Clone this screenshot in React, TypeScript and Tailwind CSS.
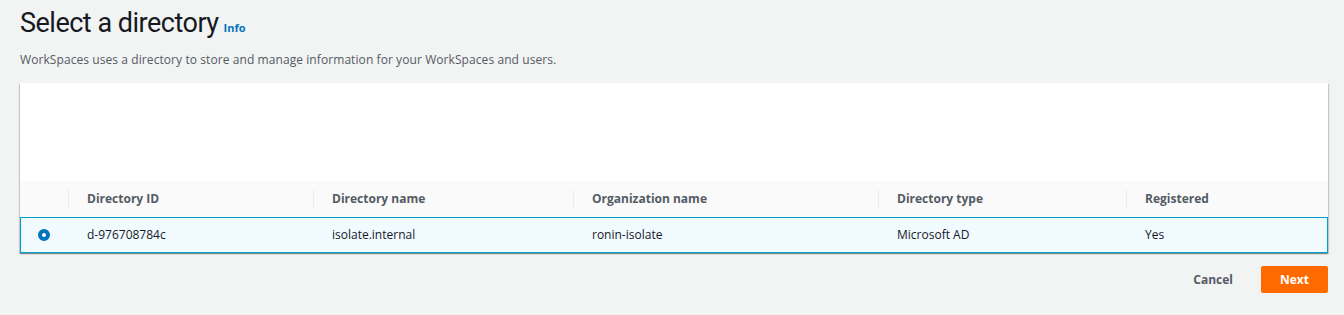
const columns = ["Directory ID", "Directory name", "Organization name", "Directory type", "Registered"];
const row = ["d-976708784c", "isolate.internal", "ronin-isolate", "Microsoft AD", "Yes"];

export default function App() {
  return (
    <div
      className="min-h-[315px] bg-[#f2f3f3] px-5 pt-[5px] text-[#16191f]"
      style={{ fontFamily: '"Open Sans", "Noto Sans", Arial, sans-serif' }}
    >
      <div className="flex items-baseline gap-[5px]">
        <h1 className="font-['Roboto',sans-serif] text-[27px] leading-[36px] font-normal tracking-[-0.5px]">Select a directory</h1>
        <a className="text-[11px] font-bold text-[#0073bb]">Info</a>
      </div>
      <p className="mt-[11px] text-[12px] leading-[16px] tracking-[0.08px] text-[#545b64]">
        WorkSpaces uses a directory to store and manage information for your WorkSpaces and users.
      </p>

      <div className="mt-[15px] w-[1308px] bg-white shadow-[0_1px_1px_0_rgba(0,28,36,0.3),1px_1px_1px_0_rgba(0,28,36,0.15),-1px_1px_1px_0_rgba(0,28,36,0.15)]">
        <div className="h-[98px]" />
        <div className="grid grid-cols-[48px_245px_260px_305px_248px_1fr] h-[37px] bg-[#fafafa] border-b border-[#eaeded] text-[12px] font-bold text-[#545b64]">
          <div />
          {columns.map((c) => (
            <div key={c} className="flex items-center">
              <span className="h-[18px] border-l border-[#eaeded]" />
              <span className="pl-[18px]">{c}</span>
            </div>
          ))}
        </div>
        <div className="grid grid-cols-[48px_245px_260px_305px_248px_1fr] h-[36px] bg-[#f1faff] border border-[#00a1c9] text-[12px] -mt-px">
          <div className="flex items-center pl-[17px]">
            <span className="h-[12px] w-[12px] rounded-full border-[4px] border-[#0073bb] bg-white" />
          </div>
          {row.map((v) => (
            <div key={v} className="flex items-center pl-[18px]">
              {v}
            </div>
          ))}
        </div>
      </div>

      <div className="mt-[13px] flex w-[1308px] justify-end items-center gap-[8px]">
        <button className="h-[27px] px-[20px] text-[12px] font-bold text-[#545b64]">Cancel</button>
        <button className="h-[27px] w-[67px] rounded-[2px] bg-[#ff6a00] text-[12px] font-bold text-white">Next</button>
      </div>
    </div>
  );
}
